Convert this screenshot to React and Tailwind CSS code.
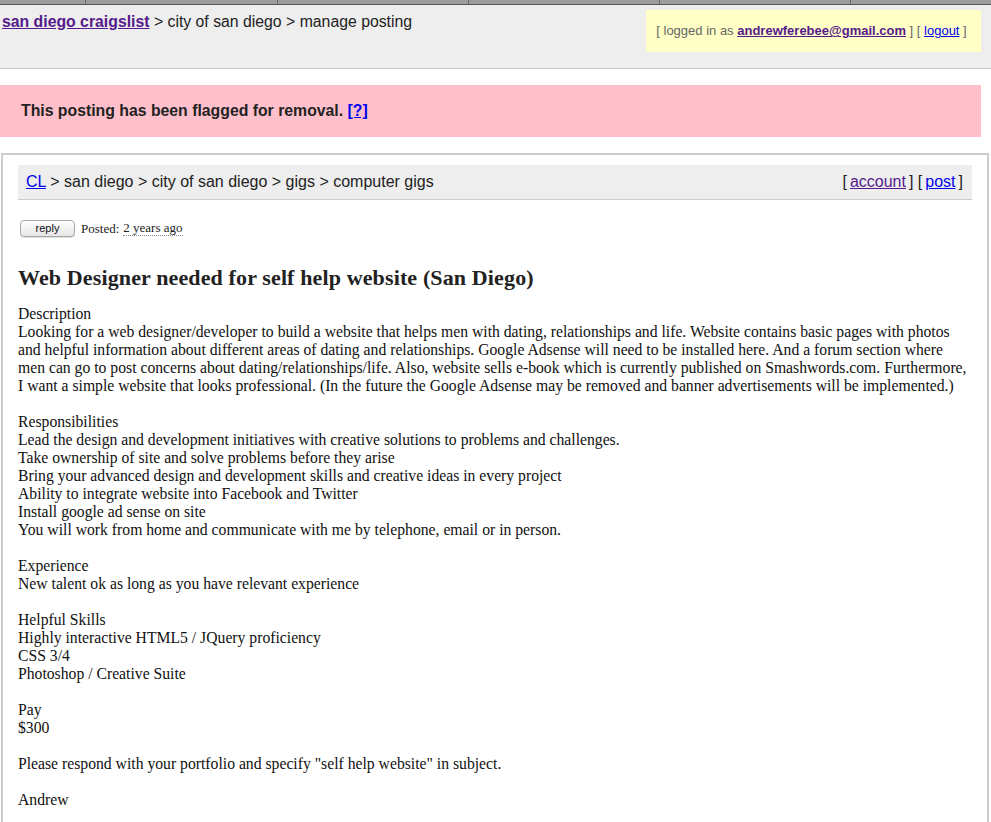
const lines = [
  "Description",
  "Looking for a web designer/developer to build a website that helps men with dating, relationships and life. Website contains basic pages with photos",
  "and helpful information about different areas of dating and relationships. Google Adsense will need to be installed here. And a forum section where",
  "men can go to post concerns about dating/relationships/life. Also, website sells e-book which is currently published on Smashwords.com. Furthermore,",
  "I want a simple website that looks professional. (In the future the Google Adsense may be removed and banner advertisements will be implemented.)",
  "",
  "Responsibilities",
  "Lead the design and development initiatives with creative solutions to problems and challenges.",
  "Take ownership of site and solve problems before they arise",
  "Bring your advanced design and development skills and creative ideas in every project",
  "Ability to integrate website into Facebook and Twitter",
  "Install google ad sense on site",
  "You will work from home and communicate with me by telephone, email or in person.",
  "",
  "Experience",
  "New talent ok as long as you have relevant experience",
  "",
  "Helpful Skills",
  "Highly interactive HTML5 / JQuery proficiency",
  "CSS 3/4",
  "Photoshop / Creative Suite",
  "",
  "Pay",
  "$300",
  "",
  'Please respond with your portfolio and specify "self help website" in subject.',
  "",
  "Andrew",
];

const tabs = [85, 277, 468, 659, 850];

export default function App() {
  return (
    <div className="min-h-[822px] overflow-hidden bg-white font-['Liberation_Sans',Arial,sans-serif] text-[#222]">
      {/* browser tab strip */}
      <div className="relative h-[5px] border-b border-[#555] bg-[#9c9c9c]">
        {tabs.map((x) => (
          <span key={x} className="absolute top-0 h-[4px] w-px bg-[#6b6b6b]" style={{ left: x }} />
        ))}
      </div>

      <header className="flex h-[64px] items-start justify-between border-b border-[#c8c8c8] bg-[#eeeeee] pl-[2px] pr-[10px]">
        <div className="pt-[7px] text-[15.8px] leading-[20px]">
          <a href="#" className="font-bold text-[#551a8b] underline">san diego craigslist</a>
          <span> &gt; city of san diego &gt; manage posting</span>
        </div>
        <div className="mt-[5px] flex h-[42px] w-[335px] items-center justify-center bg-[#ffffc6] pr-[4px] text-[13px] text-[#666]">
          <span>
            [ logged in as{" "}
            <a href="#" className="font-bold text-[#551a8b] underline">andrewferebee@gmail.com</a> ] [{" "}
            <a href="#" className="text-[#0000ee] underline">logout</a> ]
          </span>
        </div>
      </header>

      <div className="mt-[16px] flex h-[52px] w-[981px] items-center bg-[#ffc0cb] pl-[21px] text-[15.8px] font-bold text-[#222]">
        This posting has been flagged for removal.&nbsp;
        <a href="#" className="text-[#0000ee] underline">[?]</a>
      </div>

      <div className="mx-[1px] mt-[16px] w-[988px] border-2 border-[#cccccc] px-[15px] pt-[10px] pb-[20px]">
        <div className="flex h-[35px] items-center justify-between border-b border-[#cccccc] bg-[#eeeeee] pl-[8px] pr-[9px] text-[16px] text-[#222]">
          <div>
            <a href="#" className="text-[#0000ee] underline">CL</a> &gt; san diego &gt; city of san diego &gt; gigs &gt; computer gigs
          </div>
          <div>
            [<span className="ml-[3px]" /><a href="#" className="text-[#551a8b] underline">account</a><span className="mr-[3px]" />] [<span className="ml-[3px]" /><a href="#" className="text-[#0000ee] underline">post</a><span className="mr-[3px]" />]
          </div>
        </div>

        <div className="mt-[19px] flex items-center pl-[2px] font-['Liberation_Serif','Times_New_Roman',serif] text-[13px] text-[#222]">
          <button className="flex h-[17px] w-[55px] items-center justify-center rounded-[4px] border border-[#a8a8a8] bg-gradient-to-b from-white to-[#e6e6e6] font-['Liberation_Sans',Arial,sans-serif] text-[11px] leading-none text-[#111] shadow-[0_1px_0_#ddd]">
            reply
          </button>
          <span className="ml-[6px]">Posted: </span>
          <span className="ml-[4px] border-b border-dotted border-[#888] leading-[14px]">2 years ago</span>
        </div>

        <h2 className="mt-[27px] font-['Liberation_Serif','Times_New_Roman',serif] text-[22px] font-bold leading-[24px] tracking-[0.13px] text-[#222]">
          Web Designer needed for self help website (San Diego)
        </h2>

        <div className="mt-[15px] font-['Liberation_Serif','Times_New_Roman',serif] text-[15.7px] leading-[18px] text-[#111]">
          {lines.map((l, i) => (
            <div key={i} className="h-[18px] whitespace-nowrap">{l}</div>
          ))}
        </div>
      </div>
    </div>
  );
}
